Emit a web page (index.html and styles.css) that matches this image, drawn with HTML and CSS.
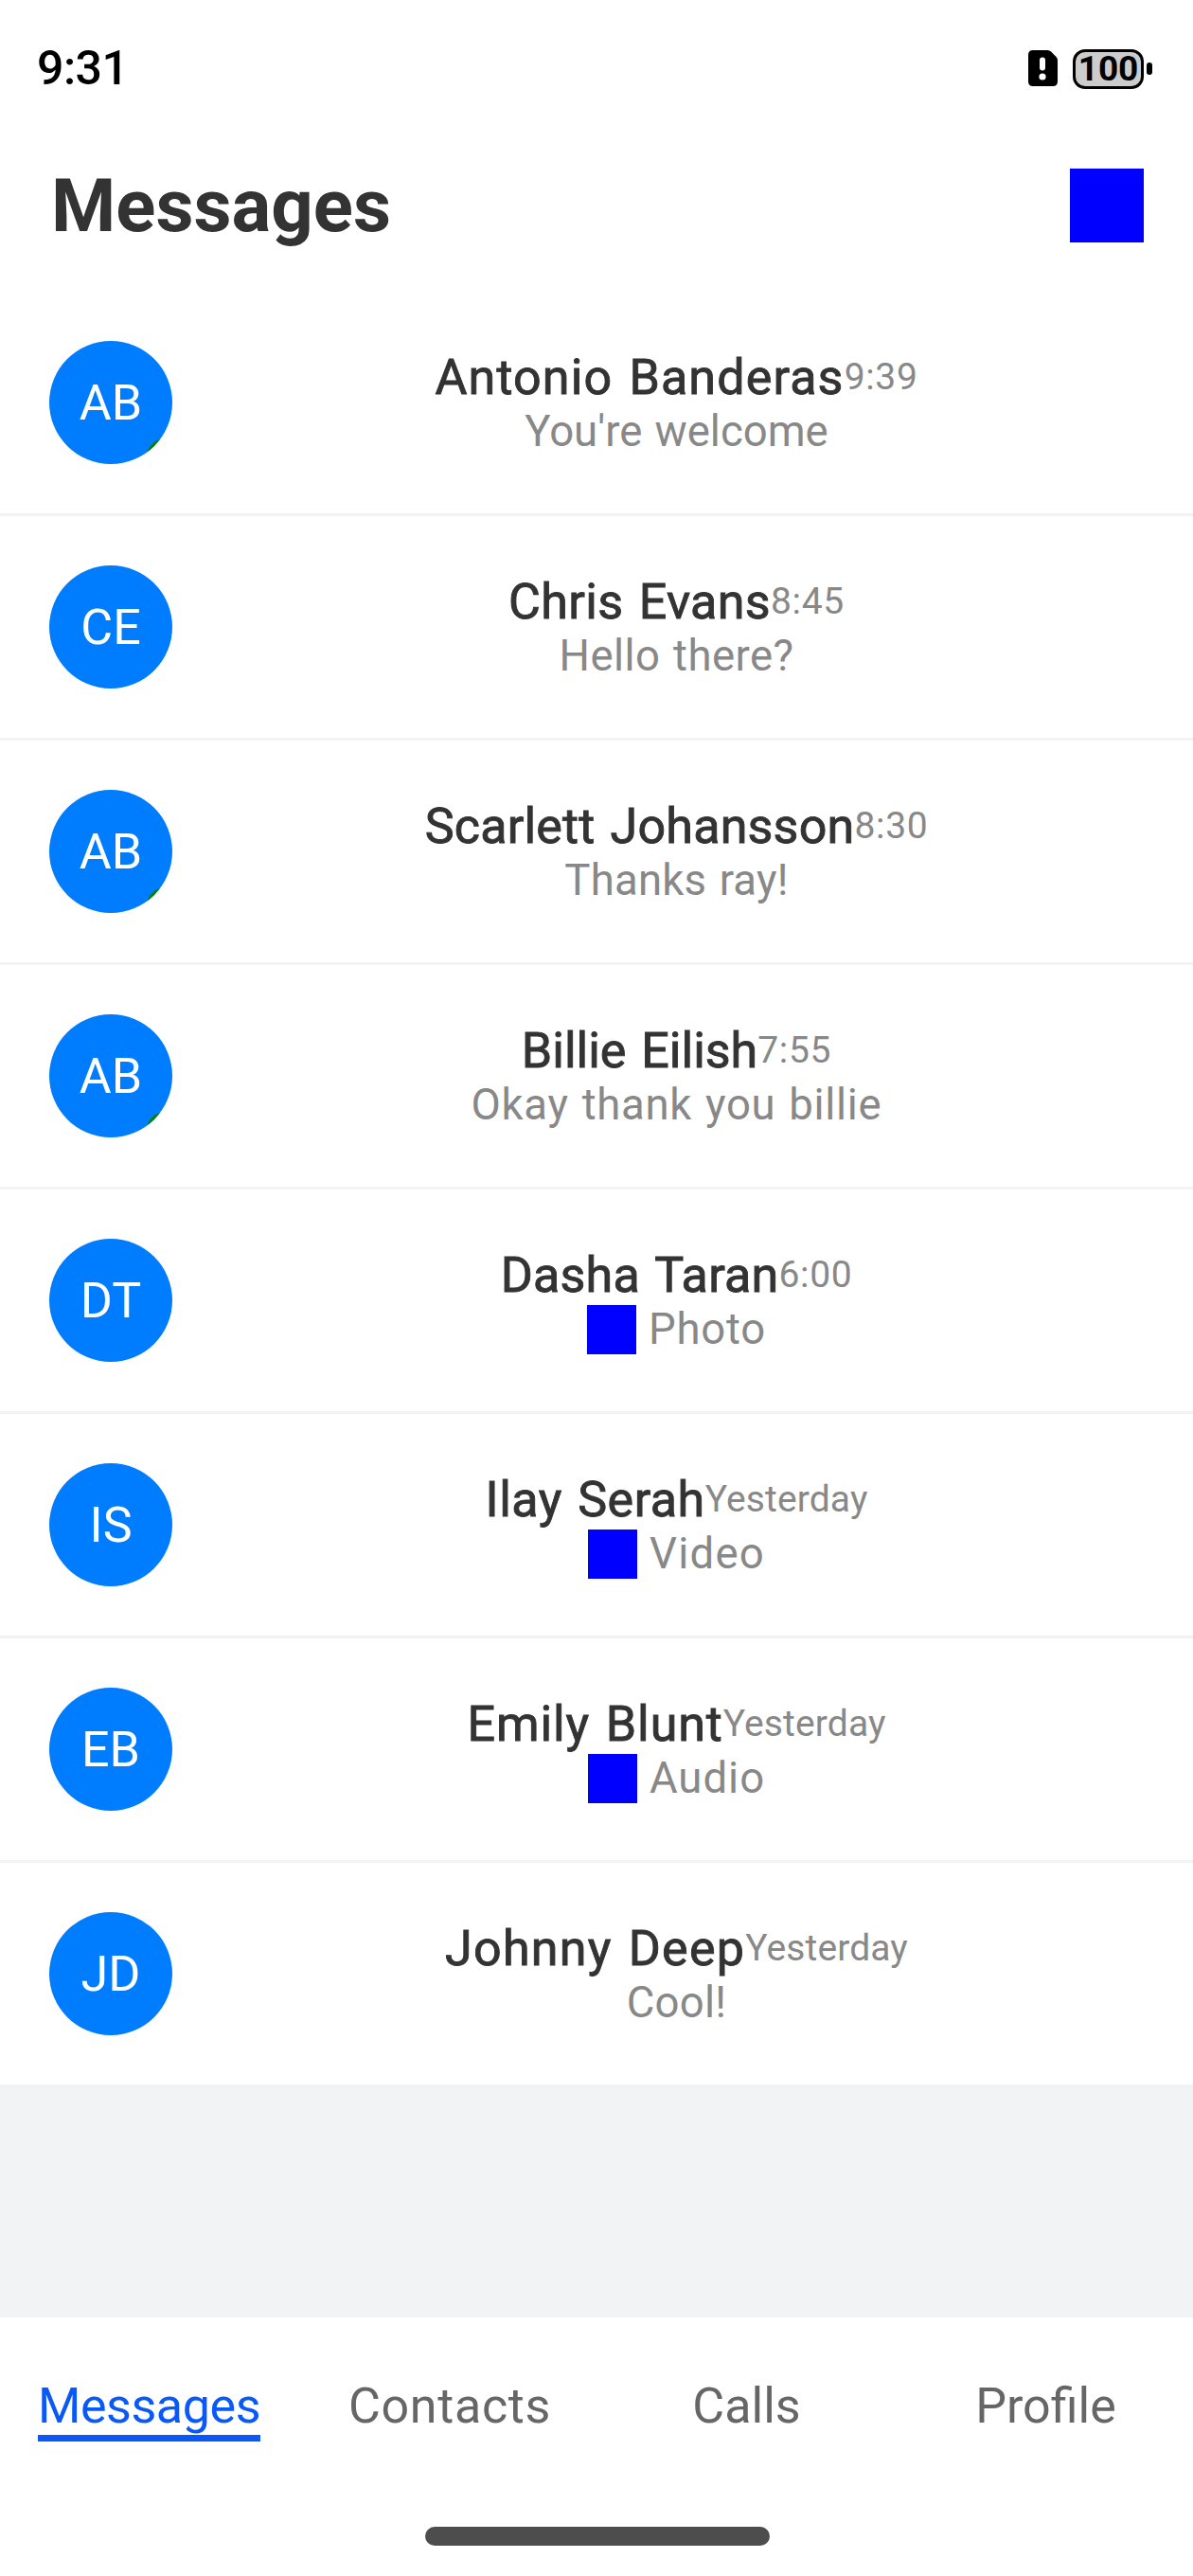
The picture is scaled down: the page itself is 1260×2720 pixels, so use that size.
FILE: index.html
```html
<!DOCTYPE html>
<html lang="en">
<head>
<meta charset="utf-8">
<title>Messages</title>
<link rel="stylesheet" href="styles.css">
</head>
<body>
<div class="screen">
  <div class="status">
    <span class="clock">9:31</span>
    <div class="status-icons">
      <svg class="sim" width="31" height="38" viewBox="0 0 31 38">
        <path d="M5 0H20.5Q22.5 0 24 1.5L29.5 7Q31 8.500 31 10.500V33Q31 38 26 38H5Q0 38 0 33V5Q0 0 5 0Z" fill="#000"/>
        <path d="M15 10.500V18.500" stroke="#fff" stroke-width="6" stroke-linecap="round"/>
        <circle cx="15" cy="28" r="3.600" fill="#fff"/>
      </svg>
      <div class="battery"><span class="level">100</span></div>
      <div class="nub"></div>
    </div>
  </div>

  <header class="header">
    <h1 class="title">Messages</h1>
    <div class="action"></div>
  </header>

  <main class="list">
    <div class="row">
      <div class="avatar">AB<span class="badge"></span></div>
      <div class="body">
        <div class="top"><span class="name">Antonio Banderas</span><span class="time">9:39</span></div>
        <div class="sub"><span class="text">You're welcome</span></div>
      </div>
    </div>
    <div class="row">
      <div class="avatar">CE</div>
      <div class="body">
        <div class="top"><span class="name">Chris Evans</span><span class="time">8:45</span></div>
        <div class="sub"><span class="text">Hello there?</span></div>
      </div>
    </div>
    <div class="row">
      <div class="avatar">AB<span class="badge"></span></div>
      <div class="body">
        <div class="top"><span class="name">Scarlett Johansson</span><span class="time">8:30</span></div>
        <div class="sub"><span class="text">Thanks ray!</span></div>
      </div>
    </div>
    <div class="row">
      <div class="avatar">AB<span class="badge"></span></div>
      <div class="body">
        <div class="top"><span class="name">Billie Eilish</span><span class="time">7:55</span></div>
        <div class="sub"><span class="text">Okay thank you billie</span></div>
      </div>
    </div>
    <div class="row">
      <div class="avatar">DT</div>
      <div class="body">
        <div class="top"><span class="name">Dasha Taran</span><span class="time">6:00</span></div>
        <div class="sub"><span class="media"></span><span class="text">Photo</span></div>
      </div>
    </div>
    <div class="row">
      <div class="avatar">IS</div>
      <div class="body">
        <div class="top"><span class="name">Ilay Serah</span><span class="time day">Yesterday</span></div>
        <div class="sub"><span class="media"></span><span class="text">Video</span></div>
      </div>
    </div>
    <div class="row">
      <div class="avatar">EB</div>
      <div class="body">
        <div class="top"><span class="name">Emily Blunt</span><span class="time day">Yesterday</span></div>
        <div class="sub"><span class="media"></span><span class="text">Audio</span></div>
      </div>
    </div>
    <div class="row">
      <div class="avatar">JD</div>
      <div class="body">
        <div class="top"><span class="name">Johnny Deep</span><span class="time day">Yesterday</span></div>
        <div class="sub"><span class="text">Cool!</span></div>
      </div>
    </div>
  </main>

  <nav class="tabs">
    <div class="tab active"><span class="label">Messages</span></div>
    <div class="tab"><span class="label contacts">Contacts</span></div>
    <div class="tab"><span class="label calls">Calls</span></div>
    <div class="tab"><span class="label profile">Profile</span></div>
  </nav>
  <footer class="home"><div class="home-bar"></div></footer>
</div>
</body>
</html>
```
FILE: styles.css
```css
* { box-sizing: border-box; }

body {
  margin: 0;
  background: #fff;
  font-family: Roboto, "Noto Sans", sans-serif;
  color: #333;
}

.screen {
  width: 1260px;
  height: 2720px;
  display: flex;
  flex-direction: column;
  overflow: hidden;
  background: #f1f3f5;
}

/* Status bar */
.status {
  height: 138px;
  padding: 52px 43px 0 39px;
  display: flex;
  justify-content: space-between;
  align-items: flex-start;
  background: #fff;
  color: #000;
}
.clock { font-size: 50px; font-weight: 500; line-height: 41px; letter-spacing: -0.5px; }
.status-icons { display: flex; align-items: flex-start; }
.sim { display: block; margin: 1px 16px 0 0; }
.battery {
  width: 75px;
  height: 42px;
  border: 3px solid #000;
  border-radius: 13px;
  background: #ccc;
  display: flex;
  justify-content: center;
}
.level { font-size: 37px; font-weight: 700; line-height: 35px; }
.nub { width: 6px; height: 13px; margin: 14px 0 0 3px; border-radius: 3px; background: #000; }

/* Header */
.header {
  height: 170px;
  padding: 40px 52px 0 54px;
  display: flex;
  justify-content: space-between;
  align-items: flex-start;
  background: #fff;
}
.title { margin: 0; font-size: 78px; font-weight: 700; line-height: 79px; }
.action { width: 78px; height: 78px; background: #00f; }

/* Conversation list */
.list { height: 2139px; display: flex; flex-direction: column; gap: 3px; }
.row {
  height: 234px;
  flex: none;
  padding: 52px 52px 0;
  display: flex;
  align-items: flex-start;
  gap: 39px;
  background: #fff;
}
.avatar {
  position: relative;
  width: 130px;
  height: 130px;
  border-radius: 50%;
  overflow: hidden;
  background: #007dff;
  color: #fff;
  font-size: 52px;
  line-height: 131px;
  text-align: center;
}
.badge {
  position: absolute;
  right: -12px;
  bottom: -12px;
  width: 39px;
  height: 39px;
  border-radius: 50%;
  background: #008000;
}
.body { flex: 1; padding-top: 8px; display: flex; flex-direction: column; align-items: center; }
.top { height: 61px; display: flex; align-items: flex-start; }
.name {
  font-size: 52px;
  line-height: 61px;
  letter-spacing: var(--name-track, 0);
  word-spacing: 3px;
  white-space: nowrap;
  -webkit-text-stroke: 0.9px #333;
}
.time { font-size: 39px; line-height: 61px; letter-spacing: 0.67px; color: #888; }
.day { letter-spacing: 0.12px; }
.sub { height: 53px; display: flex; align-items: flex-start; gap: 13px; }
.text { font-size: 45.5px; line-height: 53px; letter-spacing: var(--text-track, 0); word-spacing: 2px; color: #888; white-space: nowrap; }
.media { width: 52px; height: 52px; margin-top: 1px; background: #00f; }

.row:nth-child(1) { --name-track: 1.15px; --text-track: 0px; }
.row:nth-child(2) { --name-track: 0.35px; --text-track: 0.45px; }
.row:nth-child(3) { --name-track: 0.2px; --text-track: 0.2px; }
.row:nth-child(4) { --name-track: 0px; --text-track: 0.7px; }
.row:nth-child(5) { --name-track: 0.25px; --text-track: 0.75px; }
.row:nth-child(6) { --name-track: 0.5px; --text-track: 1.25px; }
.row:nth-child(7) { --name-track: 0.9px; --text-track: 1px; }
.row:nth-child(8) { --name-track: 1.25px; --text-track: 0.25px; }

/* Bottom navigation */
.tabs {
  height: 221px;
  padding-top: 64px;
  display: grid;
  grid-template-columns: repeat(4, 1fr);
  justify-items: center;
  align-items: start;
  background: #fff;
}
.label {
  display: block;
  border-bottom: 7px solid transparent;
  font-size: 52px;
  line-height: 60px;
  color: #666;
}
.contacts { letter-spacing: 0.7px; padding-left: 5px; }
.calls { padding-left: 2px; }
.profile { padding-left: 4px; }
.active .label { letter-spacing: -0.43px; color: #0a59f7; border-color: #0a59f7; }

.home { height: 52px; padding-left: 2px; display: flex; justify-content: center; background: #fff; }
.home-bar { width: 364px; height: 20px; border-radius: 10px; background: #4d4d4d; }
```
